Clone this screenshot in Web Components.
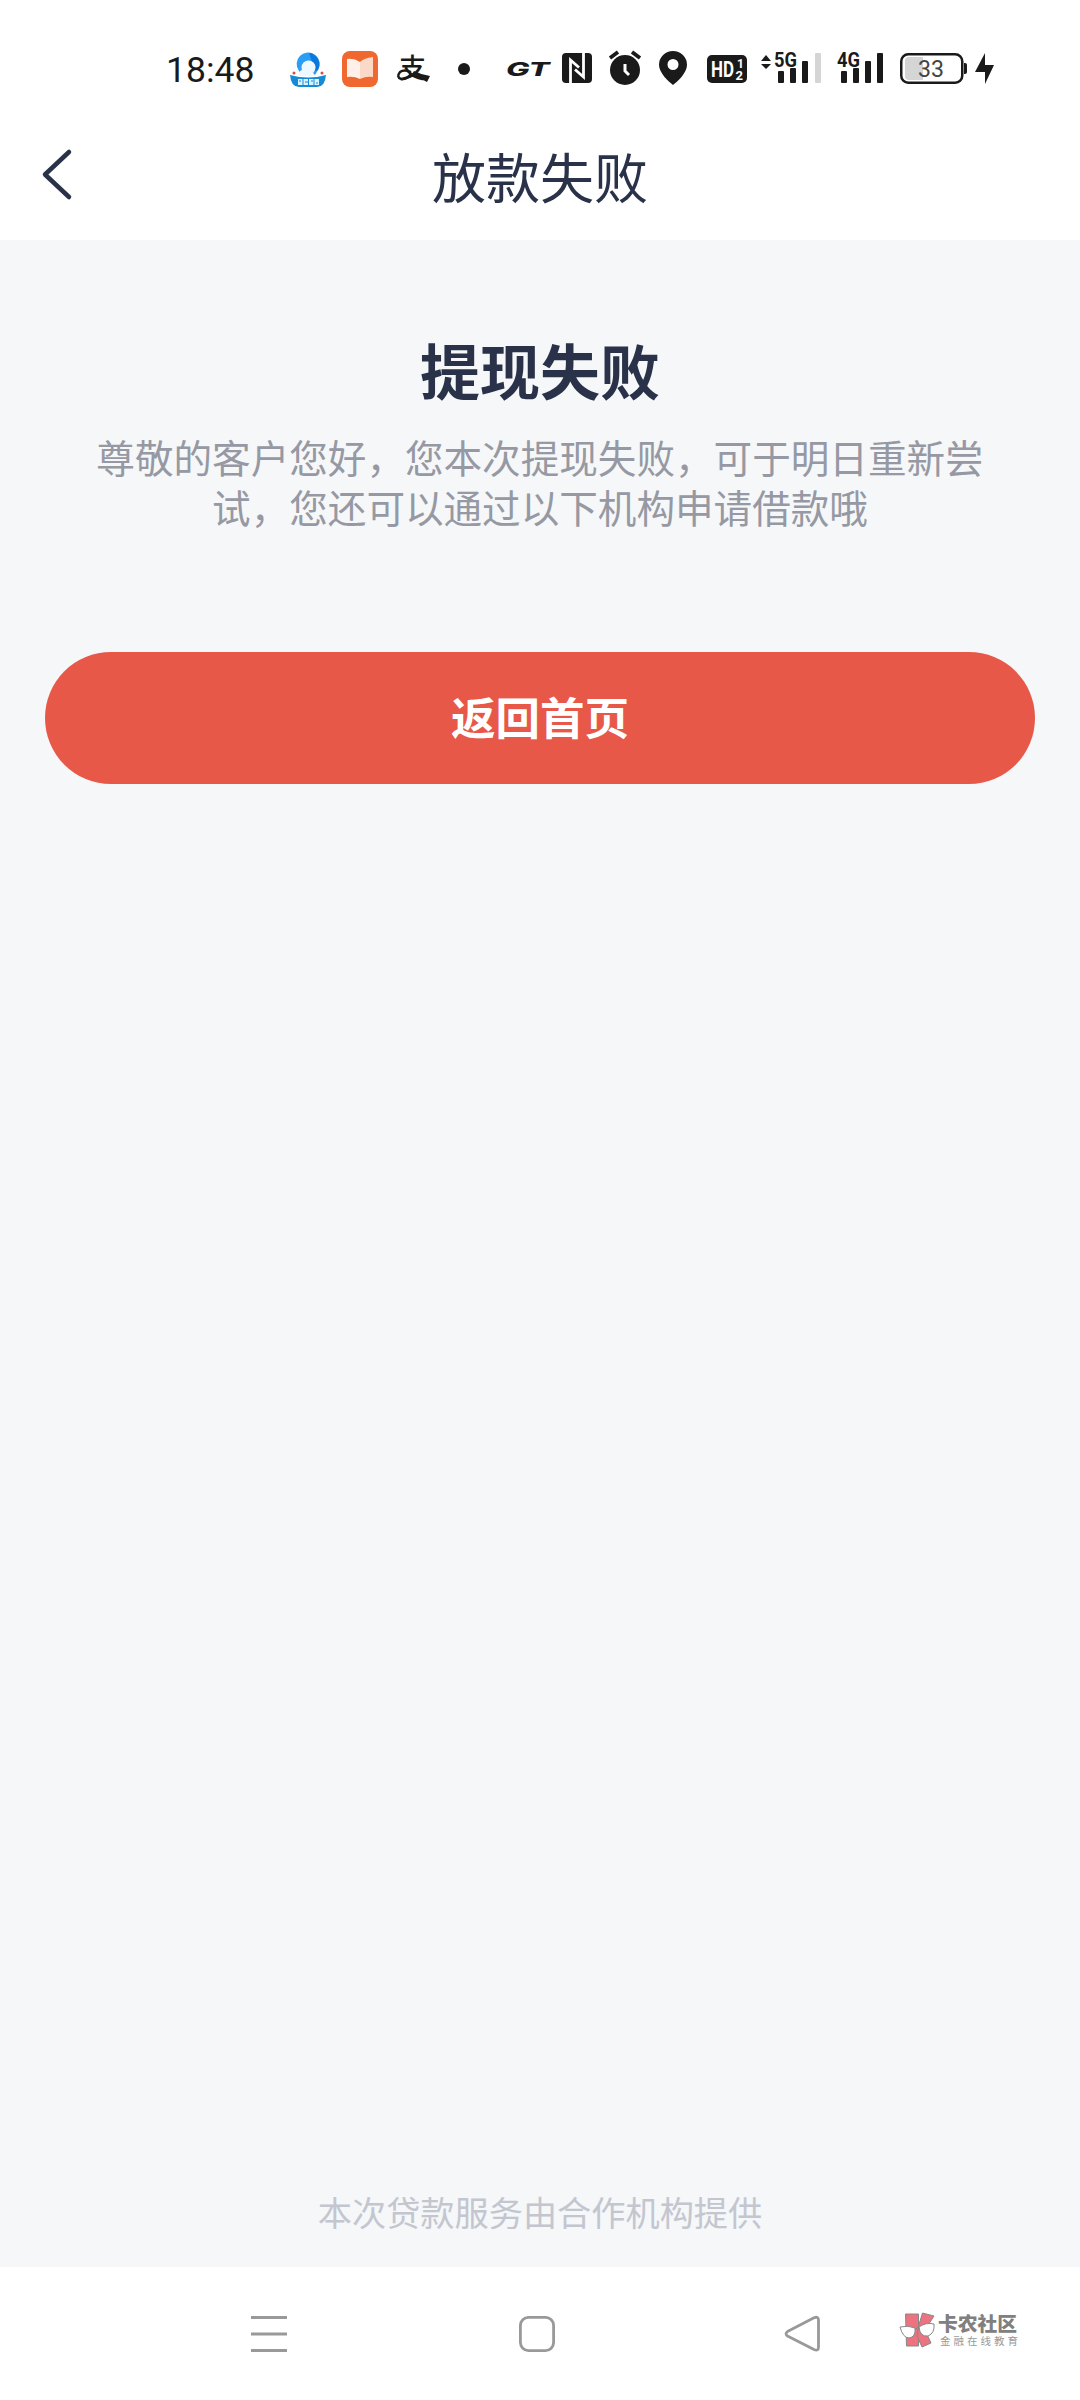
<!DOCTYPE html>
<html lang="zh-CN">
<head>
<meta charset="UTF-8">
<meta name="viewport" content="width=device-width, initial-scale=1.0">
<title>放款失败</title>
<style>
  body {
    margin: 0;
    background: #fff;
    font-family: "Noto Sans CJK SC", sans-serif;
  }
</style>
</head>
<body>
<app-screen>
  <status-bar slot="top" time="18:48"></status-bar>
  <page-header slot="top">放款失败</page-header>
  <result-message>
    <span slot="title">提现失败</span>
    尊敬的客户您好，您本次提现失败，可于明日重新尝试，您还可以通过以下机构申请借款哦
  </result-message>
  <primary-button>返回首页</primary-button>
  <page-note>本次贷款服务由合作机构提供</page-note>
  <system-nav slot="bottom"><brand-mark></brand-mark></system-nav>
</app-screen>

<script>
class AppScreen extends HTMLElement {
  connectedCallback() {
    this.attachShadow({ mode: "open" });
    this.shadowRoot.innerHTML = `
      <style>
        :host {
          display: flex;
          flex-direction: column;
          width: 1080px;
          height: 2400px;
          overflow: hidden;
        }

        main {
          flex: 1;
          display: flex;
          flex-direction: column;
          background: #f5f7f9;
        }
      </style>
      <slot name="top"></slot>
      <main><slot></slot></main>
      <slot name="bottom"></slot>
    `;
  }
}

class StatusBar extends HTMLElement {
  connectedCallback() {
    this.attachShadow({ mode: "open" });
    this.shadowRoot.innerHTML = `
      <style>
        :host {
          display: flex;
          align-items: flex-start;
          height: 136px;
          box-sizing: border-box;
          padding: 49px 0 0 166px;
          color: #1a1a1a;
        }

        time {
          width: 90px;
          font: 35.5px/42px Roboto, sans-serif;
          white-space: nowrap;
        }

        svg {
          flex: none;
          height: 40px;
          fill: #1a1a1a;
          overflow: visible;
        }

        .apps, .state {
          display: flex;
        }

        .apps { margin-left: 34px; gap: 16px; }
        .dot { margin-left: 6px; }
        .state { margin-left: 36px; }
        .state svg + svg { margin-left: var(--gap, 16px); }
      </style>

      <time>${this.getAttribute("time")}</time>

      <div class="apps">
        <!-- browser -->
        <svg width="36" viewBox="0 0 36 40">
          <path d="M9 22A11.500 11.500 0 1 1 28 21L25 26H11Z" fill="#2a9df4"/>
          <path d="M19 4A11.500 11.500 0 0 1 28 21L25 22Z" fill="#0b78dc"/>
          <circle cx="18.500" cy="18.500" r="7" fill="#eef8ff"/>
          <path d="M9 27Q8 22 12 21Q19 19 26 27Z" fill="#eef8ff"/>
          <path d="M0 26Q18 31 36 26Q35 38 27 38H9Q1 38 0 26Z" fill="#168bd5"/>
          <circle cx="4" cy="24" r="1.500" fill="#d94a4a"/>
          <circle cx="32" cy="24" r="1.500" fill="#d94a4a"/>
          <path d="M8 30h4.500v6H8zM13.500 30h4.500v6h-4.500zM19 30h4.500v6H19zM24.500 30h4.500v6h-4.500z" fill="#d8f2ff"/>
          <path d="M9 32h2M15 33h3M21 32h2M26 34h2" stroke="#168bd5"/>
        </svg>
        <!-- reader -->
        <svg width="36" viewBox="0 0 36 40">
          <rect y="2" width="36" height="36" rx="8" fill="#f0672f"/>
          <path d="M5 10Q12 9 18 13V30Q12 27 5 28Z" fill="#fff1e9"/>
          <path d="M31 8Q22 9 18 13V30Q24 27 31 28Z" fill="#fbd9c8"/>
        </svg>
        <!-- payment -->
        <svg width="38" viewBox="0 0 38 40">
          <text x="5" y="29" font-family="Noto Sans CJK SC" font-weight="500" font-size="27">支</text>
          <path d="M20 22Q28 26 36 27L33 33Q25 29 18 25Z"/>
          <path d="M17 25Q12 31 7 30Q2 28 6 23Q10 20 17 23" fill="none" stroke="#1a1a1a" stroke-width="2.400"/>
        </svg>
        <svg class="dot" width="20" viewBox="0 0 20 40"><circle cx="10" cy="20" r="6"/></svg>
      </div>

      <div class="state">
        <svg width="46" viewBox="3 0 46 40" style="margin-left:-4px">
          <text transform="translate(3 27) scale(1.62 1)" font-family="Inter, sans-serif" font-style="italic" font-weight="800" font-size="18.500" textLength="27" lengthAdjust="spacingAndGlyphs">GT</text>
        </svg>
        <!-- nfc -->
        <svg width="30" viewBox="0 0 30 40" style="--gap:10px">
          <rect y="4" width="30" height="30" rx="4"/>
          <path d="M8.500 34V11L17 18.500M21.500 4V28L13 20.500" fill="none" stroke="#fff" stroke-width="2.800"/>
        </svg>
        <!-- alarm -->
        <svg width="32" viewBox="0 0 32 40" style="--gap:17px">
          <circle cx="16" cy="21" r="15"/>
          <path d="M1 9L9 3M23 3L31 9" stroke="#1a1a1a" stroke-width="3.800"/>
          <path d="M16 15V22L20 26" fill="none" stroke="#fff" stroke-width="3"/>
        </svg>
        <!-- location -->
        <svg width="28" viewBox="0 0 28 40" style="--gap:18px">
          <path fill-rule="evenodd" d="M14 2A14 14 0 0 1 28 16C28 24 18 33 14 36C10 33 0 24 0 16A14 14 0 0 1 14 2ZM14 10A5.500 5.500 0 1 0 14 21A5.500 5.500 0 1 0 14 10Z"/>
        </svg>
        <!-- hd calls -->
        <svg width="40" viewBox="0 0 40 40" style="--gap:20px">
          <rect y="6" width="40" height="28" rx="5"/>
          <g fill="#fff" font-family="Roboto, sans-serif" font-weight="700">
            <text x="4" y="28" font-size="22" textLength="23" lengthAdjust="spacingAndGlyphs">HD</text>
            <text x="30" y="19" font-size="12">1</text>
            <text x="28.500" y="31" font-size="13">2</text>
          </g>
        </svg>
        <!-- 5g signal, fourth bar empty -->
        <svg width="61" viewBox="0 0 61 40" style="--gap:14px">
          <path d="M0 12L5 6L10 12ZM0 15H10L5 20Z"/>
          <text x="13" y="17.500" font-family="Roboto, sans-serif" font-weight="700" font-size="21" textLength="23" lengthAdjust="spacingAndGlyphs">5G</text>
          <rect x="17" y="22" width="6" height="12" rx="1"/>
          <rect x="29" y="19" width="6" height="15" rx="1"/>
          <rect x="41" y="12" width="6" height="22" rx="1"/>
          <rect x="54" y="4" width="6" height="30" rx="1" fill="#d5d5d5"/>
        </svg>
        <!-- 4g signal -->
        <svg width="47" viewBox="0 0 47 40" style="--gap:15px">
          <text x="0" y="17.500" font-family="Roboto, sans-serif" font-weight="700" font-size="21" textLength="23" lengthAdjust="spacingAndGlyphs">4G</text>
          <rect x="4" y="22" width="6" height="12" rx="1"/>
          <rect x="16" y="19" width="6" height="15" rx="1"/>
          <rect x="28" y="12" width="6" height="22" rx="1"/>
          <rect x="40" y="4" width="6" height="30" rx="1"/>
        </svg>
        <!-- battery -->
        <svg width="67" viewBox="0 0 67 40" style="--gap:16px">
          <rect x="1.250" y="5.250" width="61" height="28.500" rx="7" fill="none" stroke="#1a1a1a" stroke-width="2.500"/>
          <path d="M9 8H23V31H9Q5 31 5 27V12Q5 8 9 8Z" fill="#d5d5d5"/>
          <path d="M64 14H65Q67 14 67 16V23Q67 25 65 25H64Z"/>
          <text x="18" y="28" font-family="Roboto, sans-serif" font-size="23" fill="#444" textLength="26" lengthAdjust="spacingAndGlyphs">33</text>
        </svg>
        <!-- charging -->
        <svg width="19" viewBox="0 0 19 40" style="--gap:8px">
          <path d="M10 4V16H19L10 35V23H0Z"/>
        </svg>
      </div>
    `;
  }
}

class PageHeader extends HTMLElement {
  connectedCallback() {
    this.attachShadow({ mode: "open" });
    this.shadowRoot.innerHTML = `
      <style>
        :host {
          display: grid;
          grid-template-columns: 120px 1fr 120px;
          height: 104px;
          color: #293249;
        }

        svg { margin: 12px 0 0 41px; }

        h1 {
          margin: 0;
          font-size: 54px;
          font-weight: 400;
          line-height: 80px;
          text-align: center;
        }
      </style>
      <svg width="32" height="54" viewBox="0 0 32 54" fill="none" stroke="#293249" stroke-width="4.500" stroke-linecap="round" stroke-linejoin="round">
        <path d="M28 4L4 26.500L28 49"/>
      </svg>
      <h1><slot></slot></h1>
    `;
  }
}

class ResultMessage extends HTMLElement {
  connectedCallback() {
    this.attachShadow({ mode: "open" });
    this.shadowRoot.innerHTML = `
      <style>
        :host {
          display: block;
          padding: 85px 90px 0;
          text-align: center;
        }

        h2 {
          margin: 0;
          color: #293249;
          font-size: 60px;
          font-weight: 700;
          line-height: 88px;
        }

        p {
          margin: 18px 0 0;
          color: #9699a3;
          font-size: 38.600px;
          font-weight: 400;
          line-height: 50px;
        }
      </style>
      <h2><slot name="title"></slot></h2>
      <p><slot></slot></p>
    `;
  }
}

class PrimaryButton extends HTMLElement {
  connectedCallback() {
    this.attachShadow({ mode: "open" });
    this.shadowRoot.innerHTML = `
      <style>
        :host {
          display: block;
          margin: 121px 45px 0;
        }

        button {
          display: block;
          width: 100%;
          height: 132px;
          padding: 0 0 4px;
          border: 0;
          border-radius: 66px;
          background: #e75848;
          color: #fff;
          font-family: inherit;
          font-size: 44.500px;
          font-weight: 700;
          line-height: 128px;
        }
      </style>
      <button><slot></slot></button>
    `;
  }
}

class PageNote extends HTMLElement {
  connectedCallback() {
    this.attachShadow({ mode: "open" });
    this.shadowRoot.innerHTML = `
      <style>
        :host {
          display: block;
          margin-top: auto;
          padding-bottom: 31px;
          color: #c4c6cf;
          font-size: 34.200px;
          font-weight: 400;
          line-height: 50px;
          text-align: center;
        }
      </style>
      <slot></slot>
    `;
  }
}

class SystemNav extends HTMLElement {
  connectedCallback() {
    this.attachShadow({ mode: "open" });
    this.shadowRoot.innerHTML = `
      <style>
        :host {
          display: flex;
          height: 133px;
          box-sizing: border-box;
          padding: 43px 62px 0 249px;
          background: #fff;
        }

        svg {
          flex: none;
          fill: none;
          stroke: #999;
          stroke-width: 2.800;
        }

        .home { margin-left: 228px; }
        .back { margin-left: 226px; }
        ::slotted(*) { margin-left: auto; }
      </style>
      <svg width="40" height="50" viewBox="0 0 40 50">
        <path d="M2 7.500H38M2 24H38M2 40.500H38"/>
      </svg>
      <svg class="home" width="40" height="50" viewBox="0 0 40 50">
        <rect x="3.400" y="7.400" width="33.200" height="33.200" rx="8"/>
      </svg>
      <svg class="back" width="40" height="50" viewBox="0 0 40 50" stroke-linejoin="round">
        <path d="M4.500 21.500L31 7.800Q35.500 6 35.500 10V37Q35.500 41.500 31 39.500L4.500 26Q1.500 23.800 4.500 21.500Z"/>
      </svg>
      <slot></slot>
    `;
  }
}

class BrandMark extends HTMLElement {
  connectedCallback() {
    this.attachShadow({ mode: "open" });
    this.shadowRoot.innerHTML = `
      <style>
        :host {
          display: flex;
          gap: 2px;
          width: 118px;
        }

        svg {
          flex: none;
          overflow: visible;
        }

        text { font-family: "Noto Sans CJK SC", sans-serif; }
      </style>
      <svg width="36" height="42" viewBox="0 0 36 42">
        <g fill="#ee7380" stroke="#888" stroke-width="1">
          <path d="M5.500 4H18.500V36H6.500Z"/>
          <path d="M18.500 16L22.500 3L34 6L25 20L31 33L22 37L17 26Z"/>
        </g>
        <g fill="#fff" stroke="#888" stroke-width="1">
          <path d="M0 17Q8 15 15 18Q16 27 9 28Q3 28 0 17Z"/>
          <path d="M19 17Q26 12 34 14Q35 23 28 26Q20 27 19 17Z"/>
          <path d="M15 19L19 17" fill="none"/>
        </g>
      </svg>
      <svg width="80" height="42" viewBox="0 0 80 42">
        <text x="0" y="20.500" font-size="19.500" font-weight="900" fill="#808080" textLength="79" lengthAdjust="spacingAndGlyphs">卡农社区</text>
        <text x="2" y="35" font-size="10.500" fill="#999" textLength="78">金融在线教育</text>
      </svg>
    `;
  }
}

customElements.define("app-screen", AppScreen);
customElements.define("status-bar", StatusBar);
customElements.define("page-header", PageHeader);
customElements.define("result-message", ResultMessage);
customElements.define("primary-button", PrimaryButton);
customElements.define("page-note", PageNote);
customElements.define("system-nav", SystemNav);
customElements.define("brand-mark", BrandMark);
</script>
</body>
</html>
